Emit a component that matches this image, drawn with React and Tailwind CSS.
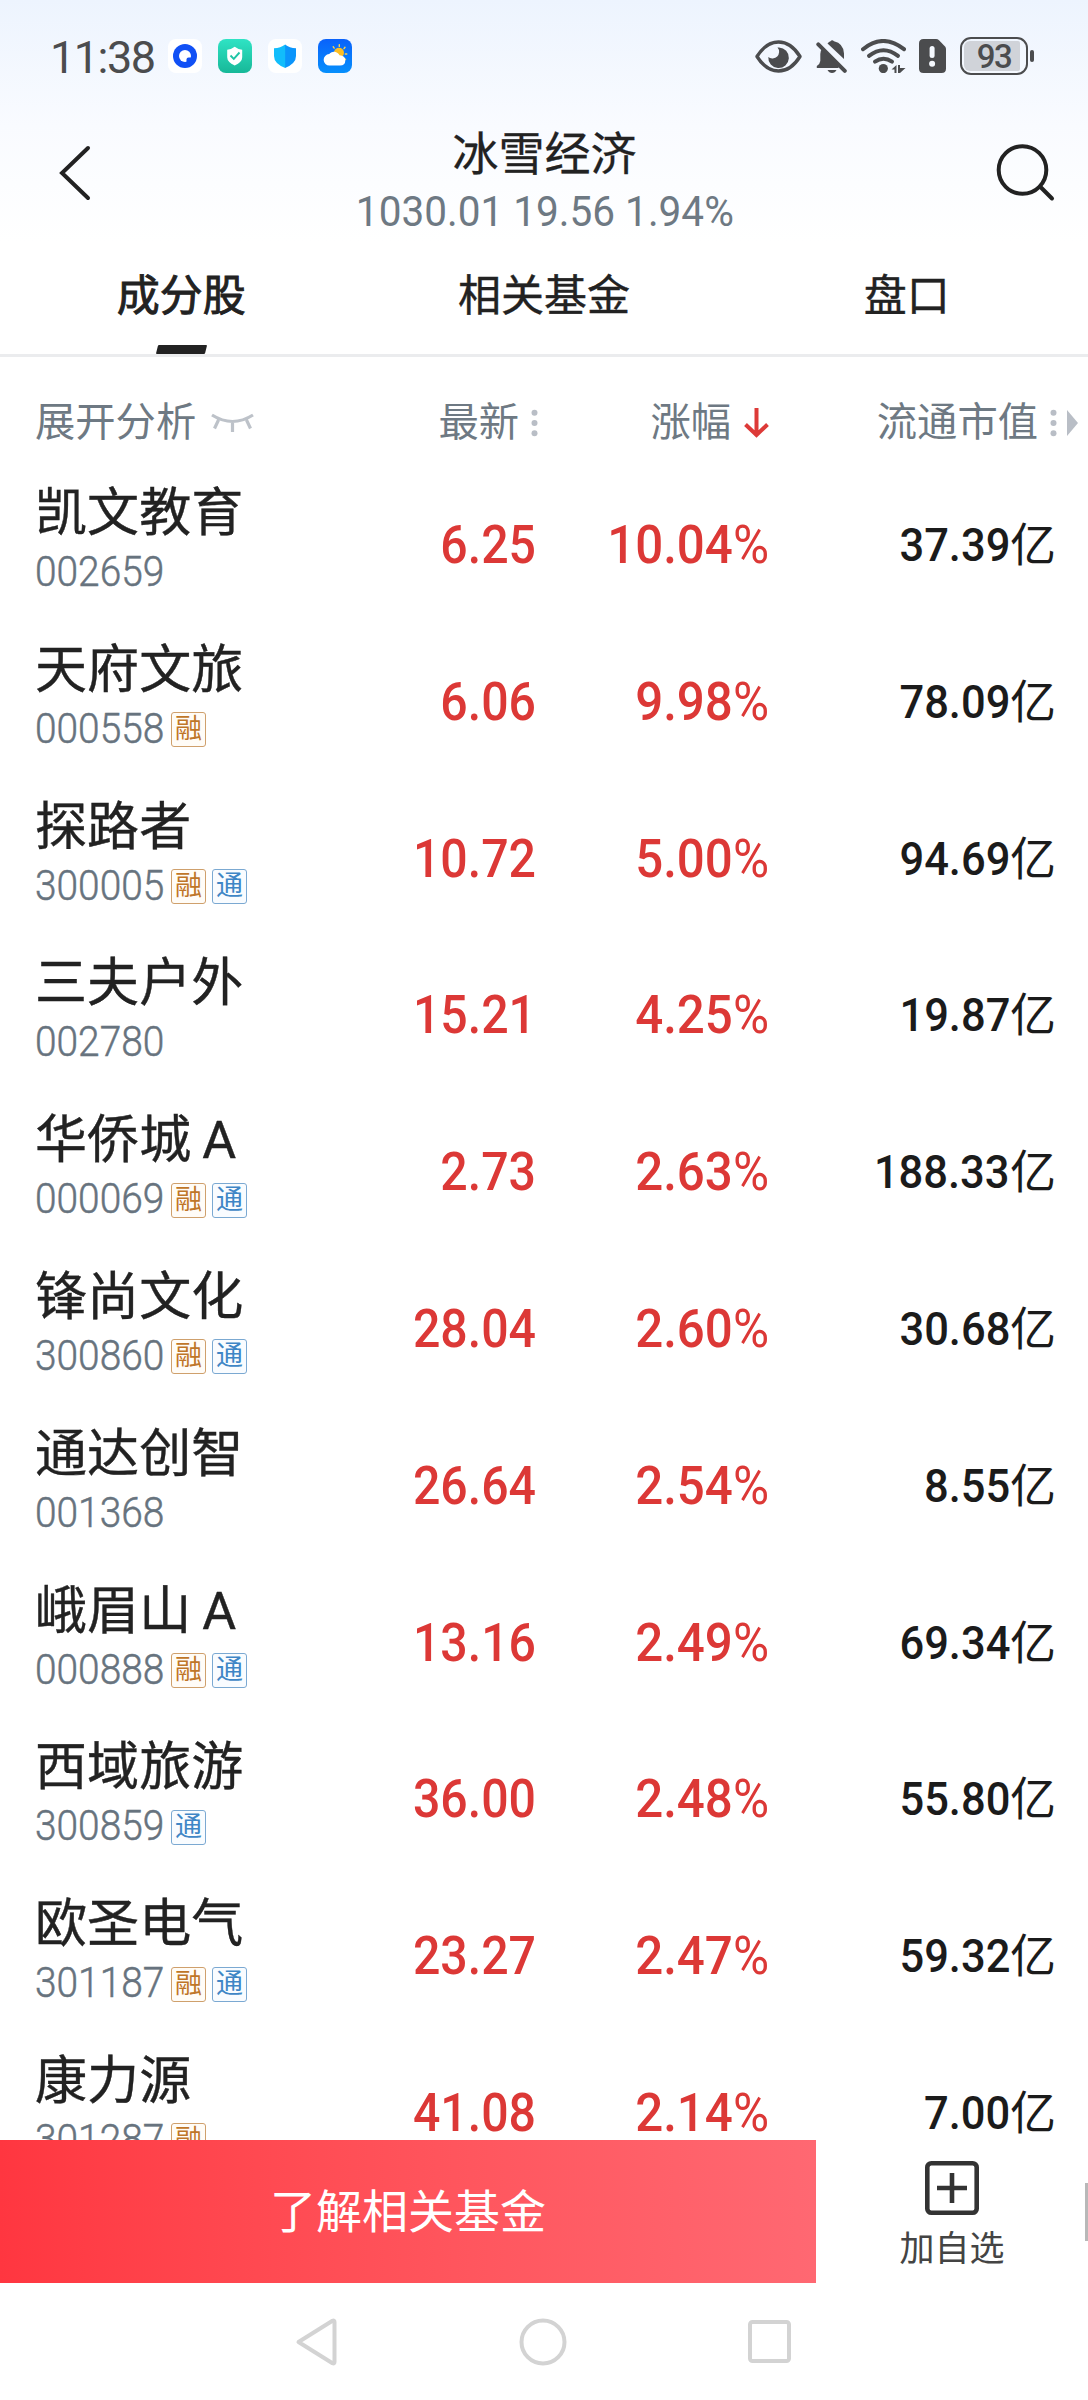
import React from "react";

const STOCKS = [
  { name: "凯文教育", code: "002659", tags: [], price: "6.25", change: "10.04", cap: "37.39" },
  { name: "天府文旅", code: "000558", tags: ["融"], price: "6.06", change: "9.98", cap: "78.09" },
  { name: "探路者", code: "300005", tags: ["融", "通"], price: "10.72", change: "5.00", cap: "94.69" },
  { name: "三夫户外", code: "002780", tags: [], price: "15.21", change: "4.25", cap: "19.87" },
  { name: "华侨城 A", code: "000069", tags: ["融", "通"], price: "2.73", change: "2.63", cap: "188.33" },
  { name: "锋尚文化", code: "300860", tags: ["融", "通"], price: "28.04", change: "2.60", cap: "30.68" },
  { name: "通达创智", code: "001368", tags: [], price: "26.64", change: "2.54", cap: "8.55" },
  { name: "峨眉山 A", code: "000888", tags: ["融", "通"], price: "13.16", change: "2.49", cap: "69.34" },
  { name: "西域旅游", code: "300859", tags: ["通"], price: "36.00", change: "2.48", cap: "55.80" },
  { name: "欧圣电气", code: "301187", tags: ["融", "通"], price: "23.27", change: "2.47", cap: "59.32" },
  { name: "康力源", code: "301287", tags: ["融"], price: "41.08", change: "2.14", cap: "7.00" },
];

function BrowserApp() {
  return (
    <svg width="34" height="34" viewBox="0 0 34 34">
      <rect width="34" height="34" rx="8" fill="#fff" />
      <circle cx="17" cy="17" r="12" fill="#1150f5" />
      <path d="M17 11a6 6 0 1 1 0 12a6 6 0 0 1 0-12Z" fill="#fff" />
      <path d="M18.5 24v-3.5q0-2 2-2h4l-2 4Z" fill="#1150f5" />
    </svg>
  );
}

function GuardApp() {
  return (
    <svg width="34" height="34" viewBox="0 0 34 34">
      <defs>
        <linearGradient id="guard" x1="0" y1="0" x2="0" y2="1">
          <stop offset="0" stopColor="#2fe3c4" />
          <stop offset="1" stopColor="#17b898" />
        </linearGradient>
      </defs>
      <rect width="34" height="34" rx="8" fill="url(#guard)" />
      <path d="M16.7 7.8q3.5 2.8 7.5 2.9v7.5q0 4.8-7.5 8.2q-7.5-3.4-7.5-8.2V10.7q4-.1 7.5-2.9Z" fill="#fff" />
      <path d="m12.5 16.5 3.3 3.3 5.7-6.3" fill="none" stroke="#1fc5a6" strokeWidth="1.9" />
    </svg>
  );
}

function ShieldApp() {
  return (
    <svg width="34" height="34" viewBox="0 0 34 34">
      <rect width="34" height="34" rx="8" fill="#fff" />
      <path d="M17 5.5q4.5 3.5 11 3.7v7.8q0 7.5-11 12Z" fill="#0b95fb" />
      <path d="M17.2 5.5q-4.7 3.5-11.2 3.7v7.8q0 7.5 11.2 12Z" fill="#12bdfb" />
    </svg>
  );
}

function WeatherApp() {
  return (
    <svg width="34" height="34" viewBox="0 0 34 34">
      <defs>
        <linearGradient id="sky" x1="0" y1="0" x2="0" y2="1">
          <stop offset="0" stopColor="#0a62fb" />
          <stop offset="1" stopColor="#068ffc" />
        </linearGradient>
      </defs>
      <rect width="34" height="34" rx="8" fill="url(#sky)" />
      <g stroke="#fbd34b" strokeWidth="1.4" strokeLinecap="round">
        <path d="M21.3 5.8v1.6M15.2 7.800l1 1.300M27 8.300l-1 1.300M27.300 15h1.500M26.500 19.500l1 1" />
      </g>
      <circle cx="21" cy="13.700" r="5" fill="#fdbe22" />
      <path d="M11.500 26.500a5.700 5.700 0 0 1-.3-11.400a6 6 0 0 1 10.300 1.200q5.800.2 5.800 5.200q0 5-5.300 5Z" fill="#fff" />
    </svg>
  );
}

function EyeStatus() {
  return (
    <svg width="47" height="34" viewBox="0 0 47 34" className="mr-[14px]">
      <path d="M2 17.500Q11 3 23.500 3T45 17.500Q36 32 23.500 32T2 17.500Z" fill="none" stroke="#4b4c4e" strokeWidth="3.400" strokeLinejoin="round" />
      <path d="M24 8.500a10.300 10.300 0 1 1-10.700 9.500q1.700 1.600 4.500 1.400q5.700-.7 6.300-6.200q.1-2.900-1.600-4.700Z" fill="#4b4c4e" />
    </svg>
  );
}

function BellOff() {
  return (
    <svg width="31" height="34" viewBox="0 0 31 34" className="mr-[14.5px]">
      <path d="M11.500 4.500Q13 2.600 14.500 2.300Q16 .2 18 2.300Q27.500 4.500 28 14.500V20Z" fill="#4b4c4e" />
      <path d="M6.200 9.500 22.500 26.500V29H.8V27Q4 25 4.300 22V15Q4.500 11.500 6.200 9.500Z" fill="#4b4c4e" />
      <path d="M2.300 5.300 28.800 31.800" stroke="#4b4c4e" strokeWidth="4" strokeLinecap="round" />
      <path d="M11.500 31h9q-1.500 3-4.500 3t-4.500-3Z" fill="#4b4c4e" />
    </svg>
  );
}

function Wifi() {
  return (
    <svg width="45" height="34" viewBox="0 0 45 34" className="mr-[13px]">
      <g fill="none" stroke="#4b4c4e" strokeWidth="4" strokeLinecap="round">
        <path d="M2 10.200q20-16.400 41 0" />
        <path d="M8 16.800q14.500-11.200 29 0" />
        <path d="M14 22.700q8.500-6 17 0" />
      </g>
      <circle cx="22.300" cy="29.600" r="4.600" fill="#4b4c4e" />
      <path d="M30.500 30.500 35.500 26v8h-2v-3.500ZM37 26h2v3h5.500L39 34h-2Z" fill="#4b4c4e" />
    </svg>
  );
}

function SimAlert() {
  return (
    <svg width="27" height="34" viewBox="0 0 27 34" className="mr-[14px]">
      <path d="M4.500 0H17q1.800 0 3 1.200l5.800 6Q27 8.500 27 10v19.500q0 4.500-4.500 4.500h-18Q0 34 0 29.500v-25Q0 0 4.500 0Z" fill="#4b4c4e" />
      <rect x="10.600" y="7" width="5" height="12" rx="2.500" fill="#f4f8fe" />
      <circle cx="13.100" cy="24.800" r="3" fill="#f4f8fe" />
    </svg>
  );
}

function Battery() {
  return (
    <div className="flex items-center gap-[2px]">
      <div className="flex h-[38px] w-[68px] rounded-[11px] border-[2.5px] border-[#4b4c4e] p-[2px]">
        <div className="flex w-[56px] items-center justify-center rounded-l-[6px] rounded-r-[2px] bg-[#d0d3d9] pl-[4px]">
          <span className="text-[33px] leading-none font-medium tracking-[-1.5px] text-[#4b4c4e]">93</span>
        </div>
      </div>
      <div className="h-[12px] w-[4px] rounded-[2px] bg-[#4b4c4e]" />
    </div>
  );
}

function StatusBar() {
  return (
    <div className="flex h-[112px] items-center pl-[50px] pr-[54px]">
      <div className="w-[118px] pt-[3px] text-[45px] leading-[50px] tracking-[-1.5px] text-[#4b4c4e]">11:38</div>
      <div className="flex gap-[16px]">
        <BrowserApp />
        <GuardApp />
        <ShieldApp />
        <WeatherApp />
      </div>
      <div className="ml-auto flex items-center">
        <EyeStatus />
        <BellOff />
        <Wifi />
        <SimAlert />
        <Battery />
      </div>
    </div>
  );
}

function TitleBar() {
  return (
    <div className="flex h-[130px] items-start justify-between pl-[58px] pr-[33px]">
      <svg width="36" height="60" viewBox="0 0 36 60" className="mt-[31px]" fill="none" stroke="#222" strokeWidth="4" strokeLinecap="round">
        <path d="M30 5 4 30l26 25" />
      </svg>
      <div className="flex flex-col items-center pt-[12px]">
        <h1 className="text-[46px] leading-[60px] text-[#222] [-webkit-text-stroke:0.3px]">冰雪经济</h1>
        <div className="h-[56px] origin-center scale-x-[0.965] text-[42px] leading-[56px] text-[#6e7983]">1030.01 19.56 1.94%</div>
      </div>
      <svg width="60" height="60" viewBox="0 0 60 60" className="mt-[31px]" fill="none" stroke="#222" strokeWidth="4" strokeLinecap="round">
        <circle cx="27.500" cy="27" r="23.800" />
        <path d="M45.500 44 57 55.500" />
      </svg>
    </div>
  );
}

function Tabs() {
  return (
    <div className="grid h-[115px] grid-cols-3 border-b-[3px] border-[#ebecee] text-center text-[43px] leading-[60px] text-[#222]">
      <div className="flex flex-col items-center justify-between pt-[24px]">
        <span className="[-webkit-text-stroke:0.9px]">成分股</span>
        <span className="h-[9px] w-[49px] -skew-x-[14deg] rounded-[1px] bg-[#222]" />
      </div>
      <div className="pt-[24px] [-webkit-text-stroke:0.4px]">相关基金</div>
      <div className="pt-[24px] [-webkit-text-stroke:0.4px]">盘口</div>
    </div>
  );
}

function SortDots() {
  return (
    <svg width="7" height="28" viewBox="0 0 7 28" fill="#b9bec6">
      <circle cx="3.500" cy="3.800" r="3" />
      <circle cx="3.500" cy="14" r="3" />
      <circle cx="3.500" cy="24.200" r="3" />
    </svg>
  );
}

function TableHead() {
  return (
    <div className="grid h-[105px] grid-cols-[251px_252px_231px_309px] pt-[27px] pl-[35px] text-[40.300px] leading-[78px] text-[#6e7983]">
      <div className="flex h-[78px] items-center">
        <span>展开分析</span>
        <svg width="43" height="20" viewBox="0 0 43 20" className="ml-[15px]" fill="none" stroke="#bdc2c9" strokeWidth="3.200">
          <path d="M1 2q20.500 13 41 0M7.500 7 3.500 15.500M21.500 9v10M35.500 7l4 8.500" />
        </svg>
      </div>
      <div className="flex h-[78px] items-center justify-end gap-[12px]">
        <span>最新</span>
        <SortDots />
      </div>
      <div className="flex h-[78px] items-center justify-end gap-[13px]">
        <span>涨幅</span>
        <svg width="25" height="30" viewBox="0 0 25 30" fill="none" stroke="#dd3a38" strokeWidth="4">
          <path d="M12.500 0v27M1.500 16.500l11 10.500 11-10.500" />
        </svg>
      </div>
      <div className="flex h-[78px] items-center justify-end">
        <span className="mr-[12px]">流通市值</span>
        <SortDots />
        <svg width="11" height="26" viewBox="0 0 11 26" className="ml-[10px]" fill="#b9bec6">
          <path d="M0 0 11 13 0 26Z" />
        </svg>
      </div>
    </div>
  );
}

function Tag({ label }) {
  const tone =
    label === "融"
      ? "border-[#cfa06c] text-[#bf7628] bg-[#fffcf7]"
      : "border-[#7ba9d2] text-[#3f86c6] bg-[#f9fcff]";
  return (
    <span className={`flex h-[35px] w-[35px] items-center justify-center rounded-[3px] border-[1px] text-[27px] leading-[33px] ${tone}`}>
      {label}
    </span>
  );
}

function StockRow({ stock }) {
  return (
    <div className="grid h-[156.8px] grid-cols-[251px_250px_233px_287px] pl-[35px]">
      <div className="flex flex-col pt-[18px]">
        <div className="h-[67px] text-[52px] leading-[68px] tracking-[0.1px] whitespace-nowrap text-[#222] [word-spacing:-2px] [-webkit-text-stroke:0.4px]">
          {stock.name}
        </div>
        <div className="flex h-[50px] items-center">
          <div className="w-[136px]">
            <span className="inline-block origin-left scale-x-[0.925] text-[42px] leading-[50px] font-light text-[#67737e] [-webkit-text-stroke:0.5px]">
              {stock.code}
            </span>
          </div>
          <div className="flex gap-[6px] pt-[2px]">
            {stock.tags.map((t) => (
              <Tag key={t} label={t} />
            ))}
          </div>
        </div>
      </div>
      <div className="origin-right scale-x-[0.91] pt-[50px] text-right text-[53px] leading-[66px] font-medium text-[#dc3836]">{stock.price}</div>
      <div className="origin-right scale-x-[0.93] pt-[50px] text-right text-[53px] leading-[66px] font-medium text-[#dc3836]">
        {stock.change}
        <span className="font-normal">%</span>
      </div>
      <div className="flex justify-end pt-[50px] text-[46px] leading-[66px] text-[#1b1b1b]">
        <span className="origin-right scale-x-[0.945] font-medium">{stock.cap}</span>
        <span>亿</span>
      </div>
    </div>
  );
}

function ActionBar() {
  return (
    <div className="flex h-[143px] bg-white">
      <div className="flex w-[816px] items-center justify-center bg-gradient-to-r from-[#ff3640] to-[#ff6872] text-[46px] leading-[60px] text-white">
        了解相关基金
      </div>
      <div className="flex flex-1 flex-col items-center pt-[21px]">
        <svg width="54" height="54" viewBox="0 0 54 54" fill="none" stroke="#333" strokeWidth="4.600">
          <rect x="2.300" y="2.300" width="49.400" height="49.400" rx="4" />
          <path d="M27 12v30M12 27h30" />
        </svg>
        <span className="mt-[13px] text-[35px] leading-[44px] text-[#444]">加自选</span>
      </div>
      <div className="-ml-[3px] mt-[43px] h-[58px] w-[3px] bg-[#b8b8b8]" />
    </div>
  );
}

function SystemNav() {
  return (
    <div className="flex h-[117px] items-center justify-between bg-white pr-[297px] pl-[295px]">
      <svg width="42" height="48" viewBox="0 0 42 48" fill="none" stroke="#d3d3d3" strokeWidth="4" strokeLinejoin="round">
        <path d="M3.500 24 37.500 2.800Q39.500 2 39.500 4v40q0 2-2 1.200Z" />
      </svg>
      <svg width="48" height="48" viewBox="0 0 48 48" fill="none" stroke="#d3d3d3" strokeWidth="4">
        <circle cx="24" cy="24" r="21.500" />
      </svg>
      <svg width="43" height="43" viewBox="0 0 43 43" fill="none" stroke="#d3d3d3" strokeWidth="4">
        <rect x="2" y="2" width="39" height="39" rx="2.500" />
      </svg>
    </div>
  );
}

export default function App() {
  return (
    <div className="flex h-[2400px] w-[1088px] flex-col overflow-hidden bg-white font-[Roboto,'Noto_Sans_CJK_SC',sans-serif]">
      <header className="bg-gradient-to-b from-[#edf4fe] via-[#f9fbff] via-[52%] to-white to-[100%]">
        <StatusBar />
        <TitleBar />
      </header>
      <Tabs />
      <TableHead />
      <main className="h-[1678px] shrink-0 overflow-hidden">
        {STOCKS.map((s) => (
          <StockRow key={s.code} stock={s} />
        ))}
      </main>
      <ActionBar />
      <SystemNav />
    </div>
  );
}
